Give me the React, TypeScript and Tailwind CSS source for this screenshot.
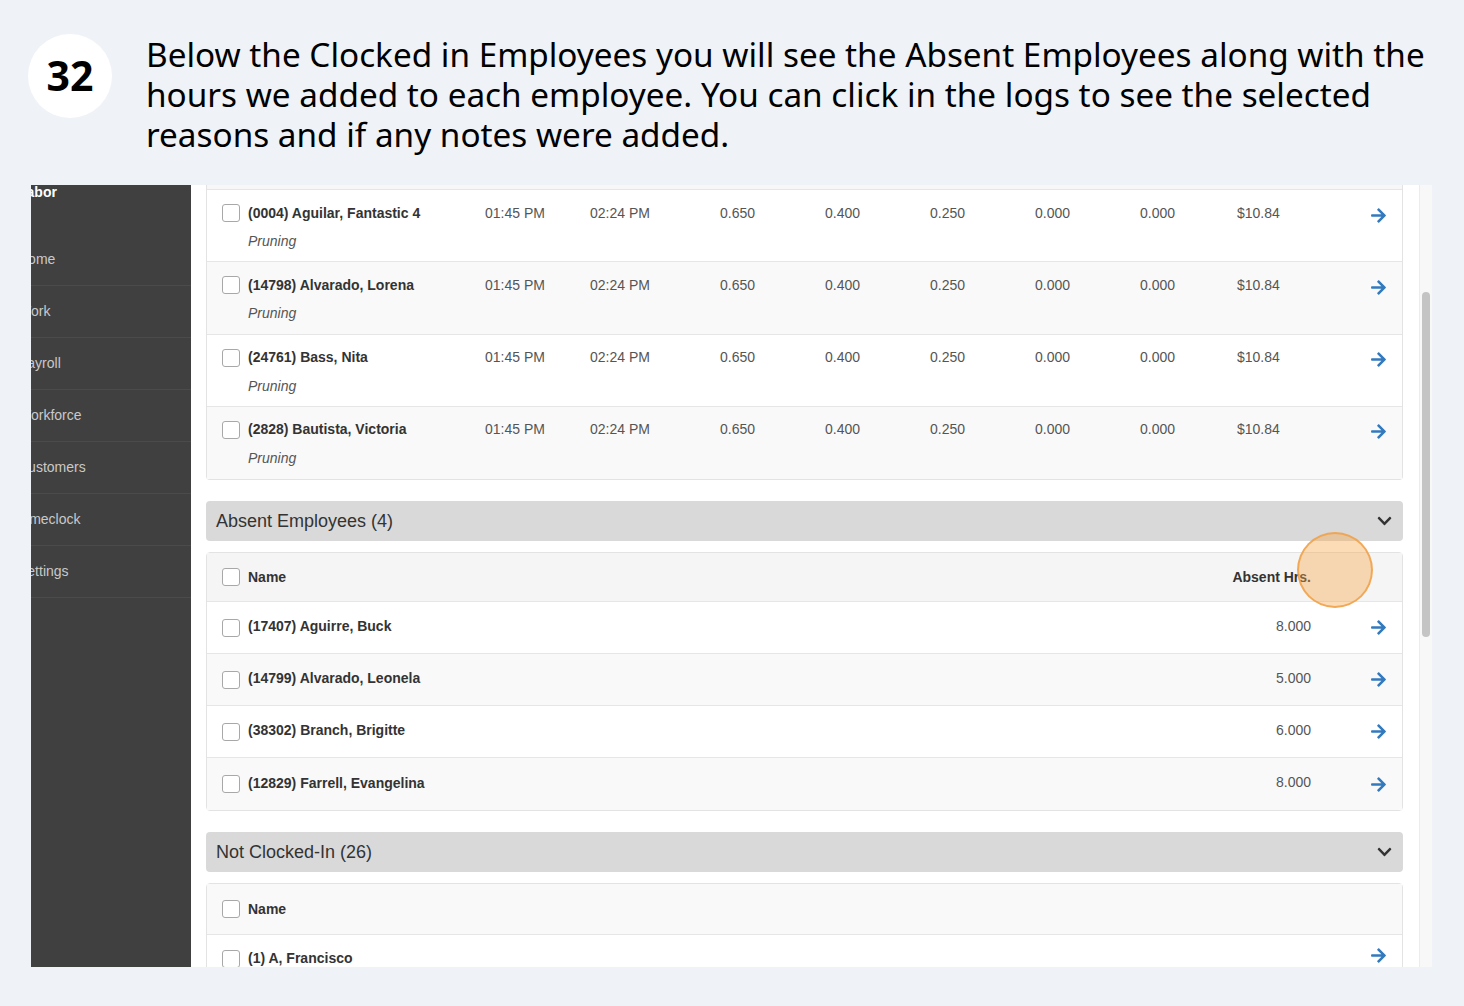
import React from "react";

const clockedIn = [
  { name: "(0004) Aguilar, Fantastic 4", bg: "bg-white" },
  { name: "(14798) Alvarado, Lorena", bg: "bg-[#f9f9f9]" },
  { name: "(24761) Bass, Nita", bg: "bg-white" },
  { name: "(2828) Bautista, Victoria", bg: "bg-[#f9f9f9]" },
];

const absent = [
  { name: "(17407) Aguirre, Buck", hrs: "8.000", bg: "bg-white" },
  { name: "(14799) Alvarado, Leonela", hrs: "5.000", bg: "bg-[#f9f9f9]" },
  { name: "(38302) Branch, Brigitte", hrs: "6.000", bg: "bg-white" },
  { name: "(12829) Farrell, Evangelina", hrs: "8.000", bg: "bg-[#f9f9f9]" },
];

const navItems = ["Home", "Work", "Payroll", "Workforce", "Customers", "Timeclock", "Settings"];

function Checkbox() {
  return <div className="h-[18px] w-[18px] shrink-0 rounded-[3px] border border-[#a8a8a8] bg-white" />;
}

function Arrow() {
  // font awesome style arrow-right
  return (
    <svg viewBox="0 30 448 452" className="h-[15px] w-[15px] shrink-0" fill="#3279bd">
      <path d="M190.5 66.9l22.2-22.2c9.4-9.4 24.6-9.4 33.9 0L441 239c9.4 9.4 9.4 24.6 0 33.9L246.6 467.3c-9.4 9.4-24.6 9.4-33.9 0l-22.2-22.2c-9.5-9.5-9.3-25 .4-34.3L311.4 296H24c-13.3 0-24-10.7-24-24v-32c0-13.3 10.7-24 24-24h287.4L190.9 101.2c-9.8-9.3-10-24.8-.4-34.3z" />
    </svg>
  );
}

function SectionBar({ title }: { title: string }) {
  return (
    <div className="flex h-[40px] items-center justify-between rounded-[4px] bg-[#d9d9d9] pl-[10px] pr-[11px]">
      <span className="text-[18px] text-[#333]">{title}</span>
      <svg viewBox="0 0 448 512" className="h-[16px] w-[15px]" fill="#333">
        <path d="M207.029 381.476L12.686 187.132c-9.373-9.373-9.373-24.569 0-33.941l22.667-22.667c9.357-9.357 24.522-9.375 33.901-.04L224 284.505l154.745-154.021c9.379-9.335 24.544-9.317 33.901.04l22.667 22.667c9.373 9.373 9.373 24.569 0 33.941L240.971 381.476c-9.373 9.372-24.569 9.372-33.942 0z" />
      </svg>
    </div>
  );
}

export default function App() {
  return (
    <div className="relative h-[1006px] w-full overflow-hidden bg-[#eff2f7]">
      {/* step header */}
      <div className="flex h-[185px] items-start pl-[28px] pt-[34px]">
        <div className="flex h-[84px] w-[84px] shrink-0 items-center justify-center rounded-full bg-white font-['Noto_Sans',sans-serif] text-[41px] font-bold text-black">
          32
        </div>
        <p className="ml-[34px] whitespace-nowrap font-['Noto_Sans',sans-serif] text-[33.3px] leading-[40px] text-black">
          Below the Clocked in Employees you will see the Absent Employees along with the
          <br />
          hours we added to each employee. You can click in the logs to see the selected
          <br />
          reasons and if any notes were added.
        </p>
      </div>

      {/* screenshot */}
      <div className="ml-[31px] flex h-[782px] w-[1401px] overflow-hidden font-['Liberation_Sans',Arial,sans-serif] text-[14px]">
        {/* sidebar */}
        <div className="w-[160px] shrink-0 overflow-hidden bg-[#404040]">
          <div className="-ml-[13px]">
            <div className="-mt-[1px] h-[50px] font-bold leading-[16px] text-white">Labor</div>
            {navItems.map(item => (
              <div key={item} className="flex h-[52px] items-center border-b border-[#4b4b4b] text-[#c9c9c9]">
                {item}
              </div>
            ))}
          </div>
        </div>

        {/* main */}
        <div className="flex-1 bg-white pl-[15px] pr-[16px]">
          {/* clocked in table, scrolled */}
          <div className="rounded-b-[4px] border-x border-b border-[#e3e3e3]">
            <div className="h-[5px] border-b border-[#e6e6e6] bg-[#f7f7f7]" />
            {clockedIn.map((row, i) => (
              <div
                key={row.name}
                className={`flex h-[72.25px] items-start pl-[15px] pr-[16px] pt-[14px] ${row.bg} ${i < clockedIn.length - 1 ? "border-b border-[#e6e6e6]" : ""}`}
              >
                <div className="w-[263px] shrink-0">
                  <div className="flex h-[18px] items-center gap-[8px]">
                    <Checkbox />
                    <span className="font-bold text-[#333]">{row.name}</span>
                  </div>
                  <div className="ml-[26px] mt-[11px] italic leading-[16px] text-[#555]">Pruning</div>
                </div>
                <div className="flex h-[18px] w-[105px] shrink-0 items-center text-[#555]">01:45 PM</div>
                <div className="flex h-[18px] w-[130px] shrink-0 items-center text-[#555]">02:24 PM</div>
                <div className="flex h-[18px] w-[105px] shrink-0 items-center text-[#555]">0.650</div>
                <div className="flex h-[18px] w-[105px] shrink-0 items-center text-[#555]">0.400</div>
                <div className="flex h-[18px] w-[105px] shrink-0 items-center text-[#555]">0.250</div>
                <div className="flex h-[18px] w-[105px] shrink-0 items-center text-[#555]">0.000</div>
                <div className="flex h-[18px] w-[97px] shrink-0 items-center text-[#555]">0.000</div>
                <div className="flex h-[18px] flex-1 items-center text-[#555]">$10.84</div>
                <div className="mt-[2px] flex h-[18px] items-center">
                  <Arrow />
                </div>
              </div>
            ))}
          </div>

          {/* absent employees */}
          <div className="mt-[21px]">
            <SectionBar title="Absent Employees (4)" />
          </div>
          <div className="mt-[11px] rounded-[4px] border border-[#e3e3e3]">
            <div className="flex h-[49px] items-center border-b border-[#e6e6e6] bg-[#f5f5f5] pl-[15px] pr-[16px]">
              <div className="flex flex-1 items-center gap-[8px]">
                <Checkbox />
                <span className="font-bold text-[#333]">Name</span>
              </div>
              <span className="font-bold text-[#333]">Absent Hrs.</span>
              <div className="w-[75px]" />
            </div>
            {absent.map((row, i) => (
              <div
                key={row.name}
                className={`flex h-[52px] items-center pl-[15px] pr-[16px] ${row.bg} ${i < absent.length - 1 ? "border-b border-[#e6e6e6]" : ""}`}
              >
                <div className="flex flex-1 items-center gap-[8px]">
                  <Checkbox />
                  <span className="-mt-[2px] font-bold text-[#333]">{row.name}</span>
                </div>
                <span className="-mt-[3px] text-[#555]">{row.hrs}</span>
                <div className="flex w-[75px] justify-end">
                  <Arrow />
                </div>
              </div>
            ))}
          </div>

          {/* not clocked in */}
          <div className="mt-[21px]">
            <SectionBar title="Not Clocked-In (26)" />
          </div>
          <div className="mt-[11px] rounded-[4px] border border-[#e3e3e3]">
            <div className="flex h-[51px] items-center border-b border-[#e6e6e6] bg-[#f9f9f9] pl-[15px] pr-[16px]">
              <div className="flex flex-1 items-center gap-[8px]">
                <Checkbox />
                <span className="font-bold text-[#333]">Name</span>
              </div>
            </div>
            <div className="flex h-[52px] items-start bg-white pl-[15px] pr-[16px] pt-[13px]">
              <div className="flex flex-1 items-center gap-[8px]">
                <Checkbox />
                <span className="font-bold text-[#333]">(1) A, Francisco</span>
              </div>
              <Arrow />
            </div>
          </div>
        </div>

        {/* scrollbar */}
        <div className="relative w-[13px] shrink-0 border-l border-[#ececec] bg-[#f8f8f8]">
          <div className="absolute left-[2px] top-[107px] h-[345px] w-[8px] rounded-full bg-[#c4c4c4]" />
        </div>
      </div>

      {/* click highlight */}
      <div className="absolute left-[1297px] top-[532px] h-[76px] w-[76px] rounded-full border-2 border-[rgba(240,160,70,0.85)] bg-[rgba(247,166,76,0.4)]" />
    </div>
  );
}
